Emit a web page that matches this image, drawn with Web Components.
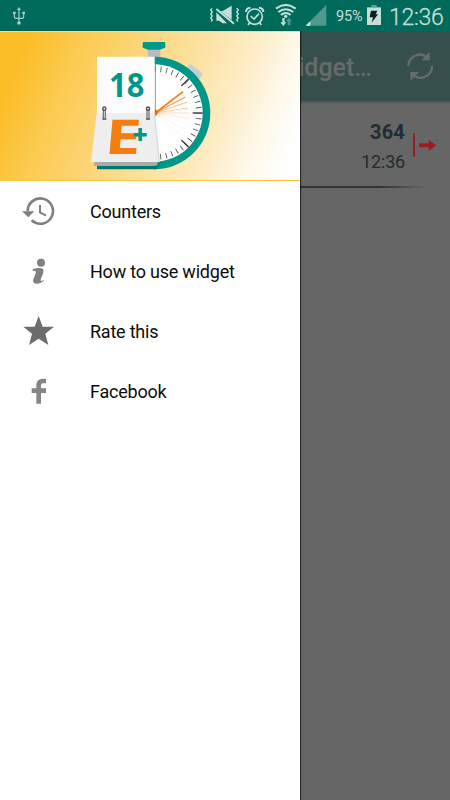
<!DOCTYPE html>
<html lang="en">
<head>
<meta charset="utf-8">
<title>Counters</title>
<style>
  html, body {
    margin: 0;
    height: 100%;
    overflow: hidden;
    font-family: Roboto, "Noto Sans", sans-serif;
  }
</style>
</head>
<body>
<counter-app></counter-app>

<script>
class StatusBar extends HTMLElement {
  constructor() {
    super();
    this.attachShadow({ mode: 'open' });

    this.shadowRoot.innerHTML = `
      <style>
        :host {
          display: flex;
          align-items: center;
          box-sizing: border-box;
          height: 31px;
          padding: 0 6px 0 10px;
          background: #006a5b;
          color: #c4dfda;
        }

        svg { display: block; flex: none; }
        .spacer { flex: 1; }

        .battery-level {
          width: 28px;
          margin: 0 3px 0 9px;
          padding-top: 3px;
          font-size: 14.5px;
          line-height: 18px;
          letter-spacing: -0.2px;
        }

        .clock {
          margin-left: 8px;
          padding-top: 3px;
          width: 55px;
          font-size: 23px;
          line-height: 27px;
          font-weight: 300;
          letter-spacing: -0.3px;
          white-space: nowrap;
          -webkit-text-stroke: 0.3px;
        }
      </style>

      <svg width="20" height="31" viewBox="30 0 60 93" fill="none" stroke="#a5cfc7" stroke-width="3.5">
        <path d="M57 28V68M43 40V50Q43 55 48 55H66Q71 55 71 50V40"/>
        <path d="M57 21l6 9H51z" fill="#a5cfc7" stroke="none"/>
        <circle cx="57" cy="69" r="5.5" fill="#a5cfc7" stroke="none"/>
        <path d="M39 35h8v7h-8zM67 35h8v7h-8z" fill="#a5cfc7" stroke="none"/>
      </svg>
      <div class="spacer"></div>
      <svg width="120" height="31" viewBox="20 0 360 93" fill="none" stroke="#c4dfda" stroke-width="5">
        <path d="M35 25l-4 5 5 6-5 6 5 6-5 6 5 6-4 5M109 25l5 5-5 6 5 6-5 6 5 6-5 6 4 5" stroke-width="4"/>
        <path d="M48 37l32 33H67L56 62h-8zM55 33h12L94 17V60z" fill="#c4dfda" stroke="none"/>
        <path d="M45 26L101 74" stroke="#006a5b" stroke-width="10"/>
        <path d="M48 27L101 71" stroke-width="6"/>
        <circle cx="163" cy="50" r="23"/>
        <path d="M137 36q0-12 13-13M176 23q13 1 13 13" stroke-width="6"/>
        <path d="M148 68l-5 7M178 68l5 7" stroke-width="5"/>
        <path d="M151 48l10 9 15-16"/>
        <path d="M227 26Q256 4 286 26M234 36Q256 19 279 36M242 45Q256 33 271 45" stroke-width="6"/>
        <circle cx="256" cy="49" r="5" fill="#c4dfda" stroke="none"/>
        <path d="M246 54h7v13h5l-9 11-9-11h6z" fill="#c4dfda" stroke="none"/>
        <path d="M262 76V64h-5l9-11 9 11h-5v12z" fill="#4f9a8d" stroke="none"/>
        <path d="M378 14V77H316z" fill="#4f9a8d" stroke="none"/>
        <path d="M330 63V77H316z" fill="#d5e9e5" stroke="none"/>
      </svg>
      <span class="battery-level">95%</span>
      <svg width="14" height="31" viewBox="140 0 42 93">
        <path d="M140 22h42v53h-42z" fill="#c4dfda"/>
        <path d="M152 32h19l-5 11h7L154 68l4-16h-10z" fill="#0b1f1b"/>
        <path d="M153 15h16v7h-16z" fill="#5fa498"/>
      </svg>
      <span class="clock">12:36</span>
    `;
  }
}

class AppToolbar extends HTMLElement {
  constructor() {
    super();
    this.attachShadow({ mode: 'open' });

    this.shadowRoot.innerHTML = `
      <style>
        :host {
          display: flex;
          align-items: center;
          justify-content: flex-end;
          box-sizing: border-box;
          height: 70px;
          padding-right: 14px;
          background: #364f4d;
          box-shadow: 0 2px 1px #575757;
          color: #686b6b;
        }

        .title {
          font-size: 25px;
          font-weight: 500;
          line-height: 30px;
          padding-top: 3px;
          white-space: nowrap;
        }

        svg { display: block; margin-left: 32px; }
      </style>

      <span class="title"><slot></slot></span>
      <svg width="32" height="32" viewBox="342 67 96 96" fill="none" stroke="#686b6b" stroke-width="7">
        <path d="M355 115A35 35 0 0 1 408 86M426 114A35 35 0 0 1 374 146"/>
        <path d="M419 72V98H394zM361 133h26L361 160z" fill="#686b6b" stroke="none"/>
      </svg>
    `;
  }
}

class CounterRow extends HTMLElement {
  constructor() {
    super();
    this.attachShadow({ mode: 'open' });

    this.shadowRoot.innerHTML = `
      <style>
        :host {
          display: flex;
          justify-content: flex-end;
          box-sizing: border-box;
          height: 87px;
          padding: 19px 13px 0 0;
          color: #212d33;
          background: linear-gradient(90deg, #333 84%, #666 95%) bottom / 100% 2px no-repeat;
        }

        .values {
          display: flex;
          flex-direction: column;
          align-items: flex-end;
          gap: 5px;
        }

        .days { font-size: 20px; line-height: 25px; font-weight: 700; letter-spacing: 0.2px; }
        .time { font-size: 18px; line-height: 24px; letter-spacing: -0.2px; }
        svg { display: block; margin: 12px 0 0 7px; }
      </style>

      <div class="values">
        <span class="days"><slot name="days"></slot></span>
        <span class="time"><slot name="time"></slot></span>
      </div>
      <svg width="25" height="26" viewBox="366 111 75 78" fill="#9e1c1f">
        <path d="M369 115h6v70h-6zM387 145h29v-11l23 17-23 17v-11h-29z"/>
      </svg>
    `;
  }
}

class DrawerHeader extends HTMLElement {
  constructor() {
    super();
    this.attachShadow({ mode: 'open' });

    this.shadowRoot.innerHTML = `
      <style>
        :host {
          display: flex;
          justify-content: center;
          box-sizing: border-box;
          height: 150px;
          border-top: 1px solid #fbd98a;
          border-bottom: 1px solid #fdc93f;
          background: linear-gradient(112deg, #fbbd26 8%, #fbcb52 24%, #fbd986 46%, #fdebc0 70%, #fef8ea 84%, #fff 95%);
        }

        svg { display: block; }
      </style>

      <svg width="140" height="148" viewBox="0 6 420 444">
        <!-- crown and side button -->
        <path d="M203 57h38v26h-38z" fill="#b9bcc0"/>
        <path d="M192 36h60q4 0 4 4v11q0 3-4 4l-13 4h-34l-13-4q-4-1-4-4V40q0-4 4-4z" fill="#009688"/>
        <path d="M330 101l40 31-13 16-39-32z" fill="#c9ccd3"/>
        <!-- dial -->
        <path d="M222 80A169 169 0 0 1 222 418z" fill="#009688"/>
        <path d="M222 103A146 146 0 0 1 222 395z" fill="#fefefe"/>
        <circle cx="225" cy="249" r="132" pathLength="48" fill="none" stroke="#555" stroke-width="17" stroke-dasharray=".15 .85" stroke-dashoffset=".075"/>
        <g stroke="#444" stroke-width="4">
          <path d="M338 249h30M304 168l22-22M304 330l22 22"/>
        </g>
        <g stroke="#f57c0f">
          <path d="M226 249L309 185" stroke-width="5"/>
          <path d="M226 249L316 201" stroke-width="3.5" opacity=".75"/>
          <path d="M226 249L322 216" stroke-width="3" opacity=".5"/>
          <path d="M226 249L324 234" stroke-width="3" opacity=".35"/>
          <path d="M226 249L326 249" stroke-width="2.5" opacity=".28"/>
          <path d="M226 249L326 265" stroke-width="2" opacity=".2"/>
          <path d="M226 249L320 281M226 249L310 297M226 249L296 312" stroke-width="2" opacity=".08"/>
        </g>
        <path d="M224 238q9 2 9 10t-9 12z" fill="#e8690b"/>
        <!-- calendar -->
        <path d="M51 400h190l-12 18H51z" fill="#00786c"/>
        <path d="M43 396h190v9q-8 3-14 3H43z" fill="#aaa"/>
        <path d="M224 80h3v170h-3z" fill="#777"/>
        <path d="M51 80h173v170H51z" fill="#fcfcfc"/>
        <path d="M50 249h175l15 147H33z" fill="#eeeeef"/>
        <path d="M225 249l15 147h-5L222 249z" fill="#dcdcdf"/>
        <g font-family="Open Sans" font-weight="700">
          <text x="87" y="200" font-size="101" textLength="106" lengthAdjust="spacingAndGlyphs" fill="#009688">18</text>
          <text x="71" y="371" font-size="144" textLength="108" lengthAdjust="spacingAndGlyphs" fill="#f57c0f" transform="translate(32.5 0) skewX(-5)">E</text>
          <text x="157" y="341" font-size="80" font-weight="800" fill="#009688">+</text>
        </g>
        <g fill="none" stroke="#555" stroke-width="4">
          <path d="M70 236v30M76 236v30M201 236v30M207 236v30" stroke="#777"/>
          <circle cx="73" cy="236" r="5"/>
          <circle cx="204" cy="236" r="5"/>
          <path d="M67 267h12M198 267h12"/>
        </g>
      </svg>
    `;
  }
}

const MENU_ICONS = {
  history: `
    <g transform="translate(-60 -42)">
      <path d="M83 95A38 38 0 1 1 95 121" fill="none" stroke="#808080" stroke-width="8"/>
      <path d="M66 94h37l-18 18z"/>
      <path d="M120 75v22l18 10" fill="none" stroke="#808080" stroke-width="6"/>
    </g>`,
  info: `
    <g transform="translate(-60 -222)">
      <circle cx="123" cy="248" r="12"/>
      <path d="M99 267Q117 261 129 266Q132 272 129 281L122 298Q121 304 125 303L131 300Q132 302 130 304Q119 313 107 311Q97 309 100 298L108 277Q109 272 99 273Q97 270 99 267z"/>
    </g>`,
  star: `
    <g transform="translate(-60 -42)" fill="#6c6c6c">
      <path d="M116 48l12 32h34l-26 21 9 34-29-19-29 19 9-34-26-21h34z"/>
    </g>`,
  facebook: `
    <g transform="translate(-60 -222)" fill="#858585">
      <path d="M109 311V279H95V265h14v-9q0-20 19-20h10v14h-9q-6 0-6 7v8h15v14h-15v32z"/>
    </g>`
};

class DrawerItem extends HTMLElement {
  constructor() {
    super();
    this.attachShadow({ mode: 'open' });
  }

  connectedCallback() {
    this.shadowRoot.innerHTML = `
      <style>
        :host {
          display: flex;
          align-items: center;
          box-sizing: border-box;
          height: 60px;
          padding-left: 20px;
          gap: 34px;
          font-size: 18px;
          letter-spacing: -0.22px;
          color: #0c0c0c;
        }

        span { padding-bottom: 2px; }
      </style>

      <svg width="36" height="36" viewBox="0 0 108 108" fill="#808080">${MENU_ICONS[this.getAttribute('icon')]}</svg>
      <span><slot></slot></span>
    `;
  }
}

class NavDrawer extends HTMLElement {
  constructor() {
    super();
    this.attachShadow({ mode: 'open' });

    this.shadowRoot.innerHTML = `
      <style>
        :host {
          display: block;
          width: 300px;
          background: #fff;
          box-shadow: 1px 0 1px rgba(0, 0, 0, 0.6);
        }

        nav {
          display: flex;
          flex-direction: column;
          padding-top: 1px;
        }
      </style>

      <drawer-header></drawer-header>
      <nav><slot></slot></nav>
    `;
  }
}

class CounterApp extends HTMLElement {
  constructor() {
    super();
    this.attachShadow({ mode: 'open' });

    this.shadowRoot.innerHTML = `
      <style>
        :host {
          display: flex;
          flex-direction: column;
          height: 100vh;
        }

        .screen {
          position: relative;
          flex: 1;
          background: #666;
        }

        /* the open drawer lies over the dimmed list */
        nav-drawer {
          position: absolute;
          top: 0;
          bottom: 0;
          left: 0;
        }
      </style>

      <status-bar></status-bar>
      <div class="screen">
        <app-toolbar>Widget…</app-toolbar>
        <counter-row>
          <span slot="days">364</span>
          <span slot="time">12:36</span>
        </counter-row>
        <nav-drawer>
          <drawer-item icon="history">Counters</drawer-item>
          <drawer-item icon="info">How to use widget</drawer-item>
          <drawer-item icon="star">Rate this</drawer-item>
          <drawer-item icon="facebook">Facebook</drawer-item>
        </nav-drawer>
      </div>
    `;
  }
}

customElements.define('status-bar', StatusBar);
customElements.define('app-toolbar', AppToolbar);
customElements.define('counter-row', CounterRow);
customElements.define('drawer-header', DrawerHeader);
customElements.define('drawer-item', DrawerItem);
customElements.define('nav-drawer', NavDrawer);
customElements.define('counter-app', CounterApp);
</script>
</body>
</html>
